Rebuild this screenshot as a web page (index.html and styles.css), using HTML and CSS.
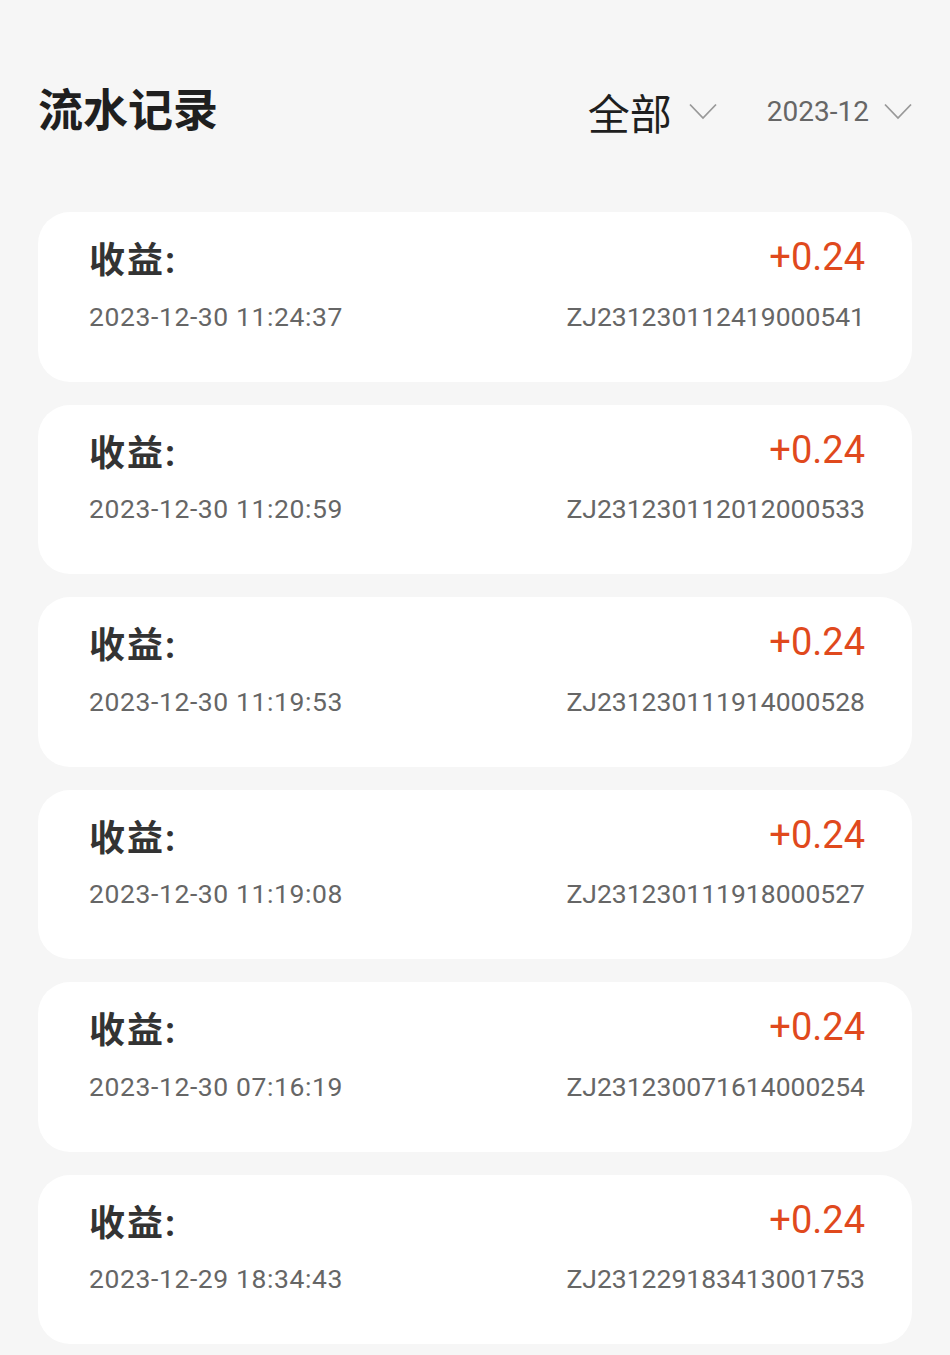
FILE: index.html
```html
<!DOCTYPE html>
<html lang="zh-CN">

<head>
  <meta charset="UTF-8">
  <meta name="viewport" content="width=device-width, initial-scale=1.0">
  <title>流水记录</title>
  <link rel="stylesheet" href="styles.css">
</head>

<body>
  <div class="page">
    <div class="header">
      <h1 class="title">流水记录</h1>
      <div class="filters">
        <div class="filter type">
          <span>全部</span>
          <svg class="arrow" width="28" height="17" viewBox="0 0 28 17"><polyline points="1,1.5 14,15 27,1.5" fill="none" stroke="#999" stroke-width="1.8"/></svg>
        </div>
        <div class="filter month">
          <span>2023-12</span>
          <svg class="arrow" width="28" height="17" viewBox="0 0 28 17"><polyline points="1,1.5 14,15 27,1.5" fill="none" stroke="#999" stroke-width="1.8"/></svg>
        </div>
      </div>
    </div>

    <ul class="list">
      <li class="item">
        <div class="row">
          <span class="label">收益:</span>
          <span class="amount">+0.24</span>
        </div>
        <div class="row sub">
          <span class="time">2023-12-30 11:24:37</span>
          <span>ZJ231230112419000541</span>
        </div>
      </li>
      <li class="item">
        <div class="row">
          <span class="label">收益:</span>
          <span class="amount">+0.24</span>
        </div>
        <div class="row sub">
          <span class="time">2023-12-30 11:20:59</span>
          <span>ZJ231230112012000533</span>
        </div>
      </li>
      <li class="item">
        <div class="row">
          <span class="label">收益:</span>
          <span class="amount">+0.24</span>
        </div>
        <div class="row sub">
          <span class="time">2023-12-30 11:19:53</span>
          <span>ZJ231230111914000528</span>
        </div>
      </li>
      <li class="item">
        <div class="row">
          <span class="label">收益:</span>
          <span class="amount">+0.24</span>
        </div>
        <div class="row sub">
          <span class="time">2023-12-30 11:19:08</span>
          <span>ZJ231230111918000527</span>
        </div>
      </li>
      <li class="item">
        <div class="row">
          <span class="label">收益:</span>
          <span class="amount">+0.24</span>
        </div>
        <div class="row sub">
          <span class="time">2023-12-30 07:16:19</span>
          <span>ZJ231230071614000254</span>
        </div>
      </li>
      <li class="item">
        <div class="row">
          <span class="label">收益:</span>
          <span class="amount">+0.24</span>
        </div>
        <div class="row sub">
          <span class="time">2023-12-29 18:34:43</span>
          <span>ZJ231229183413001753</span>
        </div>
      </li>
    </ul>
  </div>
</body>

</html>
```

FILE: styles.css
```css
* {
  margin: 0;
  padding: 0;
  box-sizing: border-box;
}

html,
body {
  background: #f6f6f6;
}

body {
  font-family: Roboto, "Noto Sans CJK SC", sans-serif;
  color: #222;
}

ul li {
  list-style: none;
}

.page {
  padding: 66px 38px 0;
}

/* 顶部标题和筛选 */
.header {
  height: 90px;
  display: flex;
  align-items: center;
  justify-content: space-between;
}

.title {
  font-size: 45px;
  font-weight: 700;
  line-height: 1;
  color: #1f1f1f;
}

.filters {
  display: flex;
  align-items: center;
  gap: 50px;
}

.filter {
  display: flex;
  align-items: center;
}

.filter.type {
  gap: 17px;
  font-size: 42px;
  color: #1f1f1f;
}

.filter.month {
  gap: 15px;
  font-size: 28px;
  color: #666;
}

.arrow {
  display: block;
}

/* 流水列表 */
.list {
  margin-top: 56px;
  display: flex;
  flex-direction: column;
  gap: 23px;
}

.item {
  height: 169.5px;
  background: #fff;
  border-radius: 32px;
  padding: 22px 47px 0 51px;
  display: flex;
  flex-direction: column;
  gap: 18px;
}

.row {
  display: flex;
  justify-content: space-between;
  align-items: center;
  height: 46px;
}

.label {
  font-size: 36px;
  font-weight: 700;
  letter-spacing: 2px;
  color: #333;
}

.amount {
  font-size: 38px;
  color: #e0491d;
}

.row.sub {
  height: 36px;
  font-size: 26.5px;
  color: #666;
}

.time {
  letter-spacing: 0.6px;
}
```
